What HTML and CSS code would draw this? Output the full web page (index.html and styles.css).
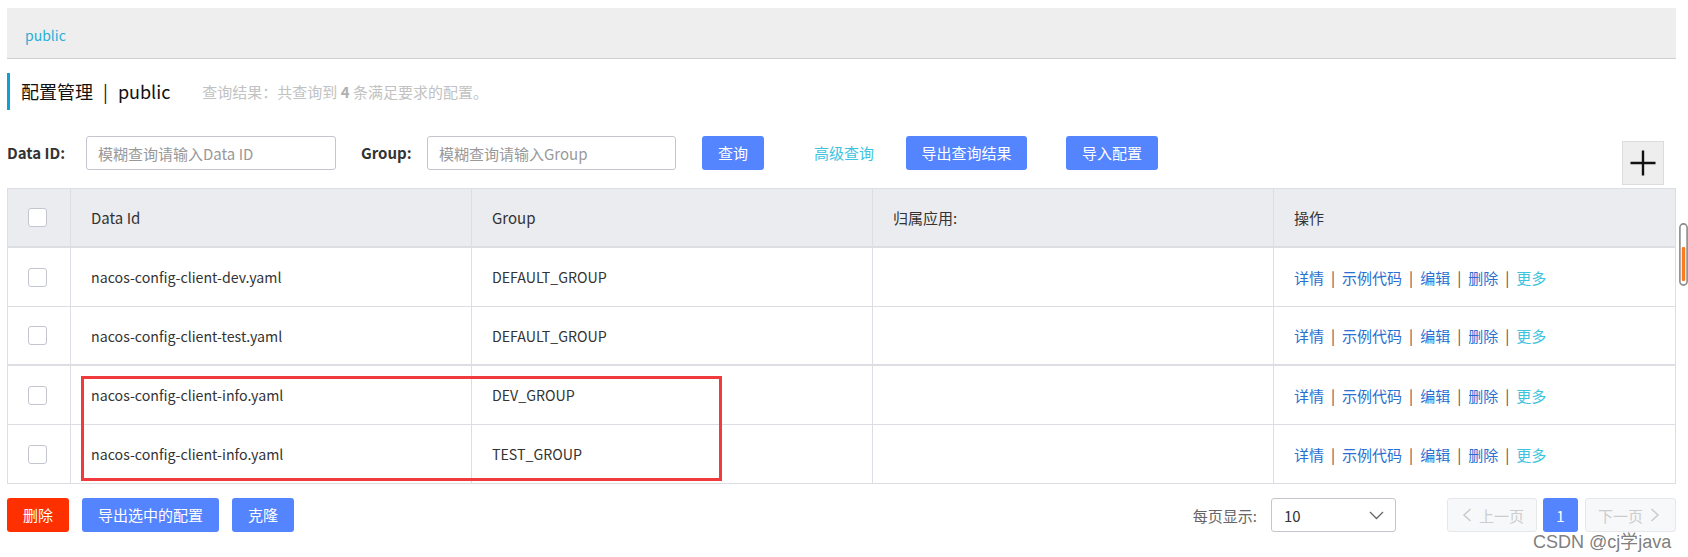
FILE: index.html
```html
<!DOCTYPE html>
<html lang="zh-CN">
<head>
<meta charset="utf-8">
<title>配置管理</title>
<link rel="stylesheet" href="styles.css">
</head>
<body>
<div class="page">
  <div class="crumb"><span>public</span></div>

  <div class="title">
    <span class="t-main">配置管理<span class="t-sep">|</span>public</span>
    <span class="t-sub">查询结果：共查询到 <b>4</b> 条满足要求的配置。</span>
  </div>

  <div class="search">
    <label class="lbl lbl-id">Data ID:</label>
    <input class="input in-id" placeholder="模糊查询请输入Data ID">
    <label class="lbl lbl-group">Group:</label>
    <input class="input in-group" placeholder="模糊查询请输入Group">
    <button class="btn primary b-query">查询</button>
    <a class="adv">高级查询</a>
    <button class="btn primary b-export">导出查询结果</button>
    <button class="btn primary b-import">导入配置</button>
    <button class="plus" aria-label="新建">
      <svg width="26" height="26" viewBox="0 0 26 26"><path d="M0.5 13H25.5M13 0.5V25.5" stroke="#111" stroke-width="2.4" fill="none"/></svg>
    </button>
  </div>

  <div class="table">
    <div class="row head">
      <div class="cell chk"><span class="box"></span></div>
      <div class="cell">Data Id</div>
      <div class="cell">Group</div>
      <div class="cell">归属应用:</div>
      <div class="cell">操作</div>
    </div>
    <div class="row">
      <div class="cell chk"><span class="box"></span></div>
      <div class="cell txt">nacos-config-client-dev.yaml</div>
      <div class="cell txt">DEFAULT_GROUP</div>
      <div class="cell"></div>
      <div class="cell ops"><a>详情</a><i>|</i><a>示例代码</a><i>|</i><a>编辑</a><i>|</i><a>删除</a><i>|</i><a class="more">更多</a></div>
    </div>
    <div class="row thick">
      <div class="cell chk"><span class="box"></span></div>
      <div class="cell txt">nacos-config-client-test.yaml</div>
      <div class="cell txt">DEFAULT_GROUP</div>
      <div class="cell"></div>
      <div class="cell ops"><a>详情</a><i>|</i><a>示例代码</a><i>|</i><a>编辑</a><i>|</i><a>删除</a><i>|</i><a class="more">更多</a></div>
    </div>
    <div class="row">
      <div class="cell chk"><span class="box"></span></div>
      <div class="cell txt">nacos-config-client-info.yaml</div>
      <div class="cell txt">DEV_GROUP</div>
      <div class="cell"></div>
      <div class="cell ops"><a>详情</a><i>|</i><a>示例代码</a><i>|</i><a>编辑</a><i>|</i><a>删除</a><i>|</i><a class="more">更多</a></div>
    </div>
    <div class="row last">
      <div class="cell chk"><span class="box"></span></div>
      <div class="cell txt">nacos-config-client-info.yaml</div>
      <div class="cell txt">TEST_GROUP</div>
      <div class="cell"></div>
      <div class="cell ops"><a>详情</a><i>|</i><a>示例代码</a><i>|</i><a>编辑</a><i>|</i><a>删除</a><i>|</i><a class="more">更多</a></div>
    </div>
    <div class="mark"></div>
  </div>

  <div class="footer">
    <button class="btn danger">删除</button>
    <button class="btn primary f-export">导出选中的配置</button>
    <button class="btn primary f-clone">克隆</button>
    <div class="pager">
      <span class="ps-label">每页显示:</span>
      <div class="select"><span>10</span>
        <svg width="15" height="9" viewBox="0 0 15 9"><path d="M1 1L7.5 7.5L14 1" stroke="#666" stroke-width="1.3" fill="none"/></svg>
      </div>
      <button class="pg prev"><svg width="10" height="14" viewBox="0 0 10 14"><path d="M8.5 1L2 7L8.5 13" stroke="#ccc" stroke-width="1.6" fill="none"/></svg><span>上一页</span></button>
      <button class="pg cur">1</button>
      <button class="pg next"><span>下一页</span><svg width="10" height="14" viewBox="0 0 10 14"><path d="M1.5 1L8 7L1.5 13" stroke="#ccc" stroke-width="1.6" fill="none"/></svg></button>
    </div>
  </div>
</div>

<div class="scrollbar">
  <svg width="9" height="63" viewBox="0 0 9 63"><rect x="0.9" y="0.9" width="7.2" height="61.2" rx="3.6" fill="#fff" stroke="#8a8a8a" stroke-width="1.6"/><rect x="2.8" y="24" width="3.4" height="34" rx="1.2" fill="#ff7a1e"/></svg>
</div>
<div class="watermark">CSDN @cj学java</div>
</body>
</html>
```

FILE: styles.css
```css
* { box-sizing: border-box; }
html, body { margin: 0; padding: 0; background: #fff; }
body {
  width: 1688px;
  height: 557px;
  overflow: hidden;
  position: relative;
  font-family: "Noto Sans CJK SC", "Noto Sans", sans-serif;
  font-size: 15px;
  color: #333;
}
.page { padding: 8px 12px 0 7px; }

.crumb {
  height: 51px;
  background: #eeeeee;
  border-bottom: 1px solid #cfcfcf;
  padding: 3px 0 0 18px;
  display: flex;
  align-items: center;
  color: #2aaed8;
  font-size: 14px;
}

.title {
  margin-top: 14px;
  height: 37px;
  border-left: 3px solid #109fd2;
  padding-left: 11px;
  display: flex;
  align-items: center;
}
.t-main { font-size: 18px; color: #111; line-height: 24px; margin-top: -2px; }
.t-sep { margin: 0 10px; }
.t-sub { margin-left: 32px; font-size: 15px; color: #c2c2c2; line-height: 20px; }
.t-sub b { color: #b0b0b0; }

.search { margin-top: 26px; display: flex; align-items: flex-start; }
.lbl { height: 34px; line-height: 34px; font-weight: 700; font-size: 15px; color: #333; }
.lbl-id { width: 79px; }
.lbl-group { width: 66px; margin-left: 25px; }
.input {
  height: 34px;
  border: 1px solid #c4c6cf;
  border-radius: 3px;
  padding: 0 11px;
  font-family: inherit;
  font-size: 15px;
  color: #333;
  outline: none;
}
.input::placeholder { color: #999; }
.in-id { width: 250px; }
.in-group { width: 249px; }

.btn {
  height: 34px;
  border: none;
  border-radius: 3px;
  padding: 0 15px;
  font-family: inherit;
  font-size: 15px;
  line-height: 34px;
  color: #fff;
  white-space: nowrap;
  flex: none;
  cursor: pointer;
}
.primary { background: #5584ff; }
.danger { background: #ff3000; width: 62px; }
.b-query { margin-left: 26px; width: 62px; }
.adv { margin-left: 50px; line-height: 34px; color: #3ec3df; width: 60px; white-space: nowrap; }
.b-export { margin-left: 32px; width: 121px; }
.b-import { margin-left: 39px; width: 92px; }
.plus {
  margin: 5px 12px 0 auto;
  width: 42px;
  height: 44px;
  background: #eeeeee;
  border: 1px solid #dcdcdc;
  padding: 0;
  display: flex;
  align-items: center;
  justify-content: center;
}

.table {
  position: relative;
  margin-top: 3px;
  border: 1px solid #dcdee3;
}
.row {
  display: grid;
  grid-template-columns: 62px 401px 401px 401px 1fr;
  height: 59px;
  border-bottom: 1px solid #dcdee3;
}
.row.head { background: #ebecf0; height: 59px; border-bottom-width: 2px; }
.row.thick { border-bottom-width: 2px; }
.row.last { border-bottom: none; height: 58px; }
.cell {
  border-left: 1px solid #dcdee3;
  padding-left: 20px;
  display: flex;
  align-items: center;
  white-space: nowrap;
  font-size: 15px;
  color: #333;
}
.cell.txt { font-size: 14.2px; }
.cell.chk { border-left: none; padding-left: 20px; }
.box {
  width: 19px;
  height: 19px;
  border: 1px solid #c4c6cf;
  border-radius: 3px;
  background: #fff;
}
.ops a { color: #2a6fd1; }
.ops a.more { color: #3ec3df; }
.ops i { font-style: normal; color: #555; margin: 0 7px; }

.mark {
  position: absolute;
  left: 73px;
  top: 187px;
  width: 641px;
  height: 105px;
  border: 3px solid #ef3a3e;
  pointer-events: none;
}

.footer {
  margin-top: 14px;
  display: flex;
  align-items: center;
}
.f-export { margin-left: 13px; width: 137px; }
.f-clone { margin-left: 13px; width: 62px; }
.pager { margin-left: auto; display: flex; align-items: center; }
.ps-label { color: #666; font-size: 15px; }
.select {
  margin-left: 14px;
  width: 125px;
  height: 34px;
  border: 1px solid #c4c6cf;
  border-radius: 3px;
  padding: 0 11px 0 12px;
  display: flex;
  align-items: center;
  justify-content: space-between;
  color: #333;
}
.pg {
  height: 34px;
  border-radius: 3px;
  font-family: inherit;
  font-size: 15px;
  display: flex;
  align-items: center;
  padding: 0;
}
.prev, .next {
  width: 90px;
  background: #f7f8fa;
  border: 1px solid #e6e7eb;
  color: #ccc;
  gap: 7px;
}
.prev { margin-left: 51px; padding-left: 14px; }
.next { width: 91px; margin-left: 7px; padding-left: 12px; }
.cur {
  margin-left: 6px;
  width: 35px;
  background: #5584ff;
  border: none;
  color: #fff;
  justify-content: center;
}

.scrollbar {
  position: absolute;
  left: 1679px;
  top: 223px;
  width: 9px;
  height: 63px;
  line-height: 0;
}
.watermark {
  position: absolute;
  left: 1533px;
  top: 527px;
  font-family: "Liberation Sans", Arial, sans-serif;
  font-size: 18px;
  color: rgba(110, 110, 110, 0.9);
  white-space: nowrap;
}
```
